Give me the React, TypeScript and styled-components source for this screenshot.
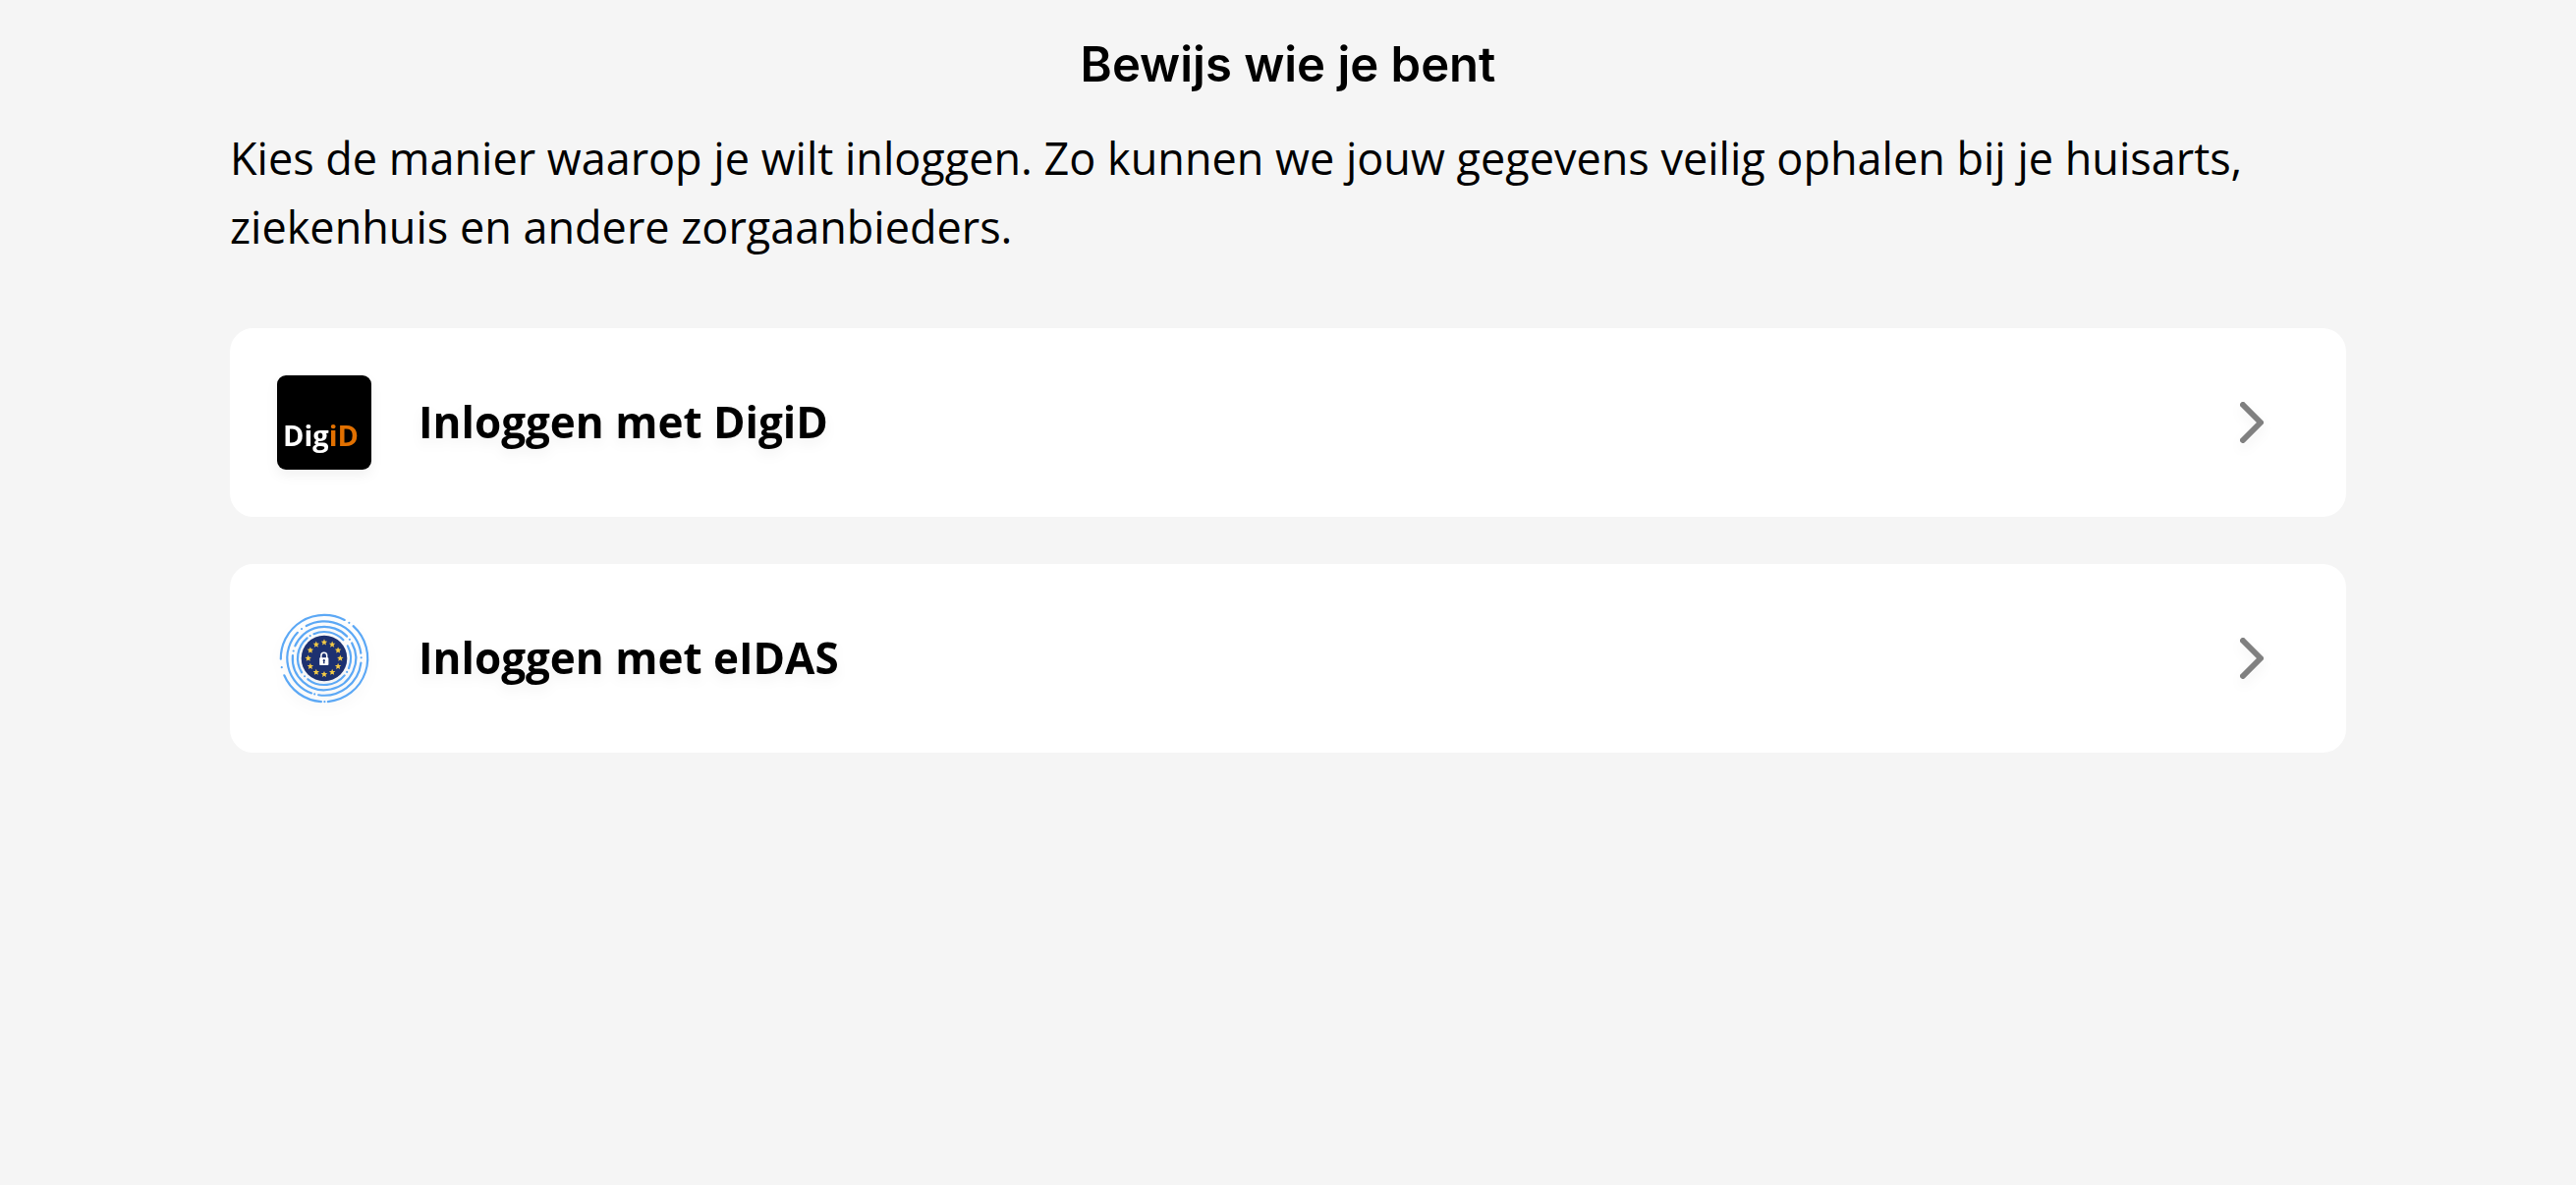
import React from "react";
import styled, { createGlobalStyle } from "styled-components";

const GlobalStyle = createGlobalStyle`
  *, *::before, *::after { box-sizing: border-box; }
  body {
    margin: 0;
    background: #f5f5f5;
    color: #000;
    font-family: "Open Sans", "Noto Sans", sans-serif;
  }
`;

const Page = styled.div`
  min-height: 100vh;
  padding: 0 234px 48px;
`;

const Header = styled.header`
  display: flex;
  justify-content: center;
  padding: 36px 0 30px;
`;

const Title = styled.h1`
  margin: 0;
  font-family: Inter, "Liberation Sans", sans-serif;
  font-size: 49px;
  line-height: 60px;
  font-weight: 600;
`;

const Intro = styled.p`
  margin: 0 0 68px;
  font-size: 45px;
  line-height: 70px;
`;

const Methods = styled.nav`
  display: grid;
  gap: 48px;
`;

const MethodCard = styled.a`
  display: flex;
  align-items: center;
  gap: 48px;
  padding: 48px 72px 48px 48px;
  border-radius: 24px;
  background: #fff;
  color: inherit;
  text-decoration: none;

  > * {
    filter: drop-shadow(0 6px 6px rgba(0, 0, 0, 0.05));
  }
`;

const MethodLabel = styled.span`
  flex: 1;
  padding-bottom: 2px;
  font-size: 44px;
  line-height: 70px;
  font-weight: 700;
`;

const DigiDLogo = styled.span`
  display: flex;
  align-items: flex-end;
  width: 96px;
  height: 96px;
  padding: 0 0 15px 6px;
  border-radius: 9px;
  background: #000;
  color: #fff;
  font-size: 29px;
  line-height: 40px;
  font-weight: 700;
`;

const DigiDAccent = styled.span`
  color: #e17000;
`;

const EidasSvg = styled.svg`
  display: block;
  width: 96px;
  height: 96px;
`;

const ChevronSvg = styled.svg`
  display: block;
  width: 48px;
  height: 48px;
`;

const CENTER = 48;

function polar(radius: number, degrees: number) {
  const a = (degrees * Math.PI) / 180;
  return { x: CENTER + radius * Math.sin(a), y: CENTER - radius * Math.cos(a) };
}

function arcPath(radius: number, from: number, to: number) {
  const sweep = (to - from + 360) % 360;
  const s = polar(radius, from);
  const e = polar(radius, to);
  return `M${s.x} ${s.y}A${radius} ${radius} 0 ${sweep > 180 ? 1 : 0} 1 ${e.x} ${e.y}`;
}

function starPoints(cx: number, cy: number, size: number) {
  return Array.from({ length: 10 }, (_, i) => {
    const r = i % 2 ? size * 0.45 : size;
    const a = (i * Math.PI) / 5;
    return `${cx + r * Math.sin(a)},${cy - r * Math.cos(a)}`;
  }).join(" ");
}

// Angles are in degrees, clockwise from the top.
const rings = [
  { radius: 44.2, arcs: [[269, 28], [42, 175], [184, 247]], dots: [35, 179.5, 258] },
  { radius: 37.7, arcs: [[331, 82], [97, 189], [200, 314]], dots: [322.5, 89, 195] },
  { radius: 32.2, arcs: [[293, 46], [61, 275]], dots: [53.5, 283.5] },
  { radius: 27, arcs: [[337, 46], [62, 112], [130, 218], [238, 320]], dots: [328, 121, 227.5] },
];

function EidasLogo() {
  return (
    <EidasSvg viewBox="0 0 96 96" aria-hidden="true">
      <g fill="none" stroke="#5ca8f5" strokeWidth="2.2" strokeLinecap="round">
        {rings.map((ring) =>
          ring.arcs.map(([from, to]) => (
            <path key={`${ring.radius}-${from}`} d={arcPath(ring.radius, from, to)} />
          ))
        )}
      </g>
      <g fill="#5ca8f5">
        {rings.map((ring) =>
          ring.dots.map((angle) => {
            const p = polar(ring.radius, angle);
            return <circle key={`${ring.radius}-${angle}`} cx={p.x} cy={p.y} r="1.1" />;
          })
        )}
      </g>
      <circle cx="48" cy="48" r="23.3" fill="#1d3170" />
      <g fill="#f5cb45">
        {Array.from({ length: 12 }, (_, i) => {
          const p = polar(16.3, i * 30);
          return <polygon key={i} points={starPoints(p.x, p.y, 3.4)} />;
        })}
      </g>
      <path d="M44.9 48v-2.8a2.9 2.9 0 0 1 5.8 0V48" fill="none" stroke="#fff" strokeWidth="1.5" />
      <rect x="43.2" y="47.2" width="9.2" height="7.8" rx="0.8" fill="#fff" />
      <path d="M47.8 49a1.2 1.2 0 0 1 .6 2.2l.2 2h-1.6l.2-2a1.2 1.2 0 0 1 .6-2.2z" fill="#1d3170" />
    </EidasSvg>
  );
}

function Chevron() {
  return (
    <ChevronSvg viewBox="0 0 48 48" aria-hidden="true">
      <path
        d="M15 6 33 24 15 42"
        fill="none"
        stroke="#808080"
        strokeWidth="6"
        strokeLinecap="round"
        strokeLinejoin="round"
      />
    </ChevronSvg>
  );
}

export default function App() {
  return (
    <Page lang="nl">
      <GlobalStyle />
      <Header>
        <Title>Bewijs wie je bent</Title>
      </Header>
      <main>
        <Intro>
          Kies de manier waarop je wilt inloggen. Zo kunnen we jouw gegevens veilig ophalen bij je
          huisarts, ziekenhuis en andere zorgaanbieders.
        </Intro>
        <Methods aria-label="Inlogmethoden">
          <MethodCard href="#digid">
            <DigiDLogo aria-hidden="true">
              Dig<DigiDAccent>iD</DigiDAccent>
            </DigiDLogo>
            <MethodLabel>Inloggen met DigiD</MethodLabel>
            <Chevron />
          </MethodCard>
          <MethodCard href="#eidas">
            <EidasLogo />
            <MethodLabel>Inloggen met eIDAS</MethodLabel>
            <Chevron />
          </MethodCard>
        </Methods>
      </main>
    </Page>
  );
}
